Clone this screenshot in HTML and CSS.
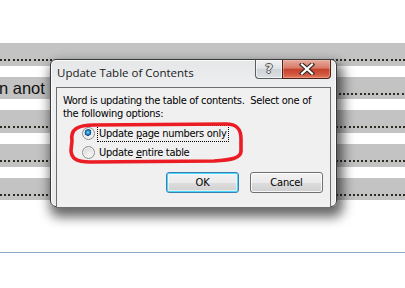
FILE: index.html
```html
<!DOCTYPE html>
<html lang="en">
<head>
    <meta charset="UTF-8">
    <meta name="viewport" content="width=device-width, initial-scale=1.0">
    <title>Update Table of Contents</title>
    <link rel="stylesheet" href="styles.css">
</head>
<body>
    <div class="page">
        <div class="band"><div class="dots"></div></div>
        <div class="band band-text"><span class="doc-text">n anot</span><div class="dots"></div></div>
        <div class="band"><div class="dots"></div></div>
        <div class="band"><div class="dots"></div></div>
        <div class="band band-short"><div class="dots"></div></div>
        <div class="rule"></div>
    </div>

    <div class="dialog">
        <div class="titlebar">
            <span class="title">Update Table of Contents</span>
            <div class="caption-buttons">
                <div class="btn-help"><span>?</span></div>
                <div class="btn-close">
                    <svg width="20" height="12" viewBox="0 0 20 12">
                        <path d="M5 1.5 L15 10.5 M15 1.5 L5 10.5" stroke="#3a2a26" stroke-width="4.4" stroke-linecap="square"/>
                        <path d="M5 1.5 L15 10.5 M15 1.5 L5 10.5" stroke="#ffffff" stroke-width="2.2" stroke-linecap="square"/>
                    </svg>
                </div>
            </div>
        </div>
        <div class="client">
            <p class="message">Word is updating the table of contents.&nbsp; Select one of the following options:</p>
            <div class="options">
                <label class="option">
                    <span class="radio checked"></span>
                    <span class="option-label focus">Update <u>p</u>age numbers only</span>
                </label>
                <label class="option">
                    <span class="radio"></span>
                    <span class="option-label">Update <u>e</u>ntire table</span>
                </label>
            </div>
            <div class="buttons">
                <button class="button default">OK</button>
                <button class="button">Cancel</button>
            </div>
        </div>
        <svg class="mark" width="180" height="50" viewBox="0 0 180 50">
            <path d="M4 21 C2 9, 10 5, 26 5 L158 4 C169 4, 173 9, 173 19 L173 31 C173 38, 164 40, 146 41 L22 42 C8 42, 3 38, 3 30 Z" fill="none" stroke="#ec1c24" stroke-width="3.6"/>
        </svg>
    </div>
</body>
</html>
```

FILE: styles.css
```css
body {
    margin: 0;
    width: 405px;
    height: 288px;
    overflow: hidden;
    background-color: #ffffff;
    font-family: "DejaVu Sans Condensed", "DejaVu Sans", sans-serif;
}
.page {
    display: flex;
    flex-direction: column;
    gap: 11px;
    padding-top: 43px;
}
.band {
    height: 23px;
    background-color: #c3c3c3;
    display: flex;
    overflow: hidden;
}
.band-text {
    height: 22px;
}
.band-short {
    height: 22px;
}
.dots {
    flex: 1;
    height: 2px;
    margin-top: 16px;
    background: repeating-linear-gradient(to right, #2e2a24 0 2px, transparent 2px 4.2px);
}
.doc-text {
    font-family: "Liberation Sans", Arial, sans-serif;
    font-size: 16.5px;
    line-height: 22px;
    color: #111111;
    margin: 0 8px 0 -1px;
}
.rule {
    height: 1px;
    margin-top: 41px;
    background-color: #8ba6c6;
}

.dialog {
    position: absolute;
    left: 50px;
    top: 59px;
    width: 285px;
    height: 146px;
    border: 1px solid #3a3a3a;
    border-radius: 6px;
    background: linear-gradient(to bottom, #e4e6e8 0, #eef0f1 30px, #e9eaeb 100%);
    box-shadow: inset 0 0 0 1px rgba(255, 255, 255, 0.85), 3px 7px 12px 3px rgba(0, 0, 0, 0.6);
}
.titlebar {
    height: 27px;
    display: flex;
    justify-content: space-between;
    padding: 0 5px 0 6px;
}
.title {
    font-family: "Open Sans", "Noto Sans", sans-serif;
    font-size: 11.5px;
    color: #1a1a1a;
    margin-top: 5px;
    line-height: 16px;
}
.caption-buttons {
    display: flex;
}
.btn-help,
.btn-close {
    height: 18px;
    border: 1px solid #5c5c5c;
    border-top: none;
    display: flex;
    align-items: center;
    justify-content: center;
}
.btn-help {
    width: 26px;
    border-right: none;
    border-radius: 0 0 0 4px;
    background: linear-gradient(to bottom, #f1f2f3 0, #dfe2e5 50%, #cfd3d7 51%, #dcdfe2 100%);
    box-shadow: inset 0 0 0 1px rgba(255, 255, 255, 0.6);
}
.btn-help span {
    font-family: "DejaVu Sans", sans-serif;
    font-weight: bold;
    font-size: 13px;
    color: #e8e8e8;
    line-height: 14px;
    text-shadow: -1px 0 #555, 1px 0 #555, 0 -1px #555, 0 1px #555;
}
.btn-close {
    width: 47px;
    border-color: #4a2018;
    border-radius: 0 0 4px 0;
    background: linear-gradient(to bottom, #e6aa9c 0, #d77a66 45%, #c5422c 52%, #d2573f 80%, #e07a5e 100%);
    box-shadow: inset 0 0 0 1px rgba(255, 210, 200, 0.35);
}

.client {
    margin: 0 5px;
    height: 113px;
    border: 1px solid #6d6d6d;
    background-color: #f0f0f0;
    padding: 6px 6px 0 6px;
    font-size: 11px;
    letter-spacing: -0.3px;
    color: #000000;
}
.message {
    margin: 0;
    line-height: 13px;
}
.options {
    display: flex;
    flex-direction: column;
    margin: 4px 0 0 19px;
}
.option {
    display: flex;
    align-items: center;
    height: 19px;
}
.radio {
    width: 11px;
    height: 11px;
    border: 1px solid #8e8f8f;
    border-radius: 50%;
    background: radial-gradient(circle at 60% 70%, #f7f7f7 0, #e0e0e0 55%, #c8c8c8 100%);
    box-shadow: inset 0 0 0 1px #f4f4f4;
    margin-right: 2px;
    flex: none;
}
.radio.checked {
    background:
        radial-gradient(circle at 45% 40%, #9fdcff 0, #2a8ed0 1.6px, #0d4f8a 3.2px, transparent 3.6px),
        radial-gradient(circle at 60% 70%, #f7f7f7 0, #e0e0e0 55%, #c8c8c8 100%);
}
.option-label {
    padding: 1px;
    line-height: 13px;
    border: 1px solid transparent;
}
.option-label.focus {
    border: 1px dotted #000000;
}
.option-label u {
    text-underline-offset: 1px;
}
.buttons {
    display: flex;
    justify-content: flex-end;
    gap: 11px;
    margin-top: 10px;
    padding-right: 1px;
}
.button {
    width: 73px;
    height: 21px;
    font-family: "DejaVu Sans Condensed", "DejaVu Sans", sans-serif;
    font-size: 11px;
    letter-spacing: -0.2px;
    color: #000000;
    border: 1px solid #707070;
    border-radius: 3px;
    background: linear-gradient(to bottom, #f2f2f2 0, #ebebeb 50%, #dddddd 51%, #cfcfcf 100%);
    box-shadow: inset 0 0 0 1px rgba(255, 255, 255, 0.8);
    padding: 0;
}
.button.default {
    border-color: #3c7fb1;
    box-shadow: inset 0 0 0 1px #48d8ff, inset 0 0 0 2px rgba(255, 255, 255, 0.5);
}
.mark {
    position: absolute;
    left: 17px;
    top: 60px;
}
```
